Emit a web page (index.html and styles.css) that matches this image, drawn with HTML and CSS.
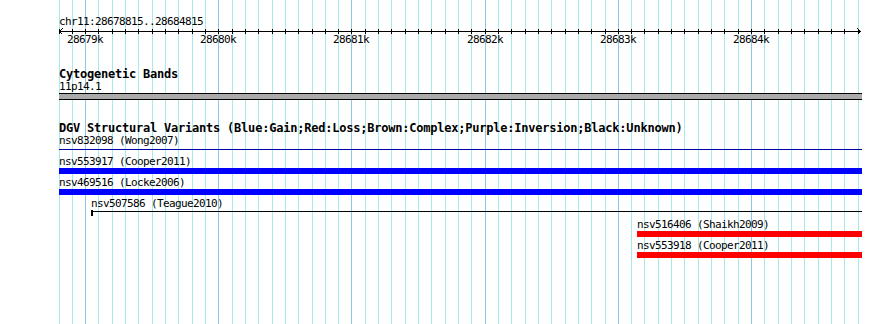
FILE: index.html
```html
<!DOCTYPE html>
<html>
  <head>
    <title>chr11:28678815..28684815</title>
    <link rel="stylesheet" href="styles.css">
  </head>
  <body>
    <div class="panel">
      <svg id="grid" class="grid" width="890" height="324"></svg>

      <div class="tracks">
        <div class="ruler">
          <div class="ruler-title">chr11:28678815..28684815</div>
          <svg id="scale" class="scale" width="890" height="18">
            <line class="axis" x1="59" y1="3.5" x2="861" y2="3.5" />
            <polyline class="axis" points="62.5,0.5 59.5,3.5 62.5,6.5" />
            <polyline class="axis" points="857.5,0.5 860.5,3.5 857.5,6.5" />
            <text x="85" y="15">28679k</text>
            <text x="218" y="15">28680k</text>
            <text x="351" y="15">28681k</text>
            <text x="485" y="15">28682k</text>
            <text x="618" y="15">28683k</text>
            <text x="751" y="15">28684k</text>
          </svg>
        </div>

        <section class="track">
          <h2 class="track-title">Cytogenetic Bands</h2>
          <div class="feature">
            <div class="feature-label">11p14.1</div>
            <div class="glyph glyph-band"></div>
          </div>
        </section>

        <section class="track">
          <h2 class="track-title">DGV Structural Variants (Blue:Gain;Red:Loss;Brown:Complex;Purple:Inversion;Black:Unknown)</h2>
          <div class="feature">
            <div class="feature-label">nsv832098 (Wong2007)</div>
            <div class="glyph glyph-line"><div class="stem"></div></div>
          </div>
          <div class="feature">
            <div class="feature-label">nsv553917 (Cooper2011)</div>
            <div class="glyph glyph-gain"></div>
          </div>
          <div class="feature">
            <div class="feature-label">nsv469516 (Locke2006)</div>
            <div class="glyph glyph-gain"></div>
          </div>
          <div class="feature" style="margin-left: 32px">
            <div class="feature-label">nsv507586 (Teague2010)</div>
            <div class="glyph glyph-line glyph-span"><div class="cap"></div><div class="stem"></div></div>
          </div>
          <div class="feature" style="margin-left: 578px">
            <div class="feature-label">nsv516406 (Shaikh2009)</div>
            <div class="glyph glyph-loss"></div>
          </div>
          <div class="feature" style="margin-left: 578px">
            <div class="feature-label">nsv553918 (Cooper2011)</div>
            <div class="glyph glyph-loss"></div>
          </div>
        </section>
      </div>
    </div>

    <script src="script.js"></script>
  </body>
</html>
```

FILE: styles.css
```css
:root {
  --grid-minor: #a6eaf0;
  --grid-major: #8ec6ea;
  --band-color: #aaaaaa;
  --gain-color: #0000ff;
  --loss-color: #ff0000;
  --line-color: #0000a8;
}

body {
  margin: 0;
  background-color: white;
}

.panel {
  position: relative;
  width: 890px;
  height: 324px;
  overflow: hidden;
  font-family: "DejaVu Sans Mono", monospace;
  font-size: 11px;
  letter-spacing: -0.62px;
  color: #000;
}

.grid {
  position: absolute;
  top: 0;
  left: 0;
}

.grid line {
  shape-rendering: crispEdges;
}

.grid .minor {
  stroke: var(--grid-minor);
}

.grid .major {
  stroke: var(--grid-major);
}

.tracks {
  position: relative;
  padding-top: 16px;
}

.ruler-title {
  padding-left: 59px;
  line-height: 12px;
}

.scale {
  display: block;
}

.scale .axis,
.scale .tick {
  stroke: #000;
  fill: none;
  shape-rendering: crispEdges;
}

.scale text {
  font-family: "DejaVu Sans Mono", monospace;
  font-size: 11px;
  letter-spacing: -0.62px;
  text-anchor: middle;
  fill: #000;
}

.track {
  width: 803px;
  margin-top: 21px;
  padding-left: 59px;
}

.track-title {
  margin: 0;
  font-size: 12px;
  font-weight: bold;
  letter-spacing: -0.22px;
  line-height: 14px;
  white-space: nowrap;
}

.feature-label {
  line-height: 12px;
  white-space: nowrap;
}

.glyph {
  height: 6px;
  margin-bottom: 3px;
}

.glyph-band {
  height: 5px;
  margin-bottom: 0;
  border-top: 1px solid #000;
  border-bottom: 1px solid #000;
  background-color: var(--band-color);
}

.glyph-gain {
  background-color: var(--gain-color);
}

.glyph-loss {
  background-color: var(--loss-color);
}

.glyph-line {
  display: flex;
  align-items: flex-start;
}

.glyph-line .stem {
  flex: 1;
  height: 1px;
  margin-top: 2px;
  background-color: var(--line-color);
}

.glyph-span .cap {
  width: 2px;
  height: 6px;
  background-color: #000;
}

.glyph-span .stem {
  margin-top: 1px;
  background-color: #000;
}
```

FILE: script.js
```js
const SVG_NS = "http://www.w3.org/2000/svg";

// one grid line / tick every 100bp, 28678800 .. 28684800
function lineX(i) {
  return Math.round(58.51 + i * 13.3175);
}

function drawGrid() {
  const grid = document.getElementById("grid");
  const scale = document.getElementById("scale");

  for (let i = 0; i <= 60; i++) {
    const x = lineX(i) + 0.5;

    const line = document.createElementNS(SVG_NS, "line");
    line.setAttribute("x1", x);
    line.setAttribute("x2", x);
    line.setAttribute("y1", 0);
    line.setAttribute("y2", 324);
    line.setAttribute("class", i % 10 === 2 ? "major" : "minor");
    grid.appendChild(line);

    const tick = document.createElementNS(SVG_NS, "line");
    tick.setAttribute("x1", x);
    tick.setAttribute("x2", x);
    tick.setAttribute("y1", 1);
    tick.setAttribute("y2", 6);
    tick.setAttribute("class", "tick");
    scale.appendChild(tick);
  }
}

drawGrid();
```
